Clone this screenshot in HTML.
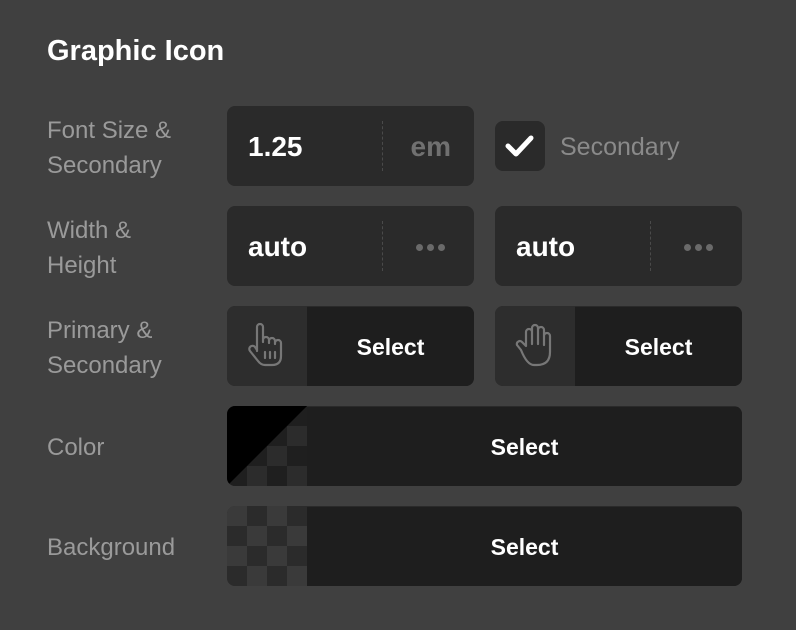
<!DOCTYPE html>
<html><head><meta charset="utf-8"><style>
*{box-sizing:border-box;margin:0;padding:0}
body{width:796px;height:630px;background:#404040;font-family:"Liberation Sans",sans-serif;position:relative;overflow:hidden}
.t{position:absolute;left:47px;top:35px;color:#fff;font-weight:bold;font-size:29px}
.l{position:absolute;left:47px;color:#9a9a9a;font-size:24px;line-height:35px}
.box{position:absolute;height:80px;background:#2a2a2a;border-radius:8px;overflow:hidden}
.v{position:absolute;left:21px;top:1px;line-height:80px;color:#fff;font-weight:bold;font-size:28px}
.sep{position:absolute;left:155px;top:15px;height:50px;border-left:1px dashed #4a4a4a}
.u{position:absolute;right:23px;top:1px;line-height:80px;color:#707070;font-weight:bold;font-size:28px}
.dots{position:absolute;right:29px;top:38px;display:flex;gap:4px}
.dots i{width:7px;height:7px;border-radius:50%;background:#6a6a6a;display:block}
.ic{position:absolute;left:0;top:0;width:80px;height:80px;background:#2d2d2d}
.sel{position:absolute;left:80px;right:0;top:1px;bottom:0;background:#1e1e1e;color:#fff;font-size:23px;font-weight:bold;text-align:center;line-height:80px}
.chk{position:absolute;background:repeating-conic-gradient(#2b2b2b 0 25%,#3a3a3a 0 50%) 0 0/40px 40px}
</style></head><body>
<div class="t">Graphic Icon</div>
<div class="l" style="top:113px">Font Size &amp;<br>Secondary</div>
<div class="l" style="top:213px">Width &amp;<br>Height</div>
<div class="l" style="top:313px">Primary &amp;<br>Secondary</div>
<div class="l" style="top:430px">Color</div>
<div class="l" style="top:530px">Background</div>

<div class="box" style="left:227px;top:106px;width:247px"><div class="v">1.25</div><div class="sep"></div><div class="u">em</div></div>
<div style="position:absolute;left:495px;top:121px;width:50px;height:50px;background:#2a2a2a;border-radius:8px">
<svg width="50" height="50"><path d="M13 25 L21 33 L36 17" fill="none" stroke="#fff" stroke-width="5" stroke-linecap="round" stroke-linejoin="round"/></svg></div>
<div style="position:absolute;left:560px;top:133px;color:#8a8a8a;font-size:25px">Secondary</div>

<div class="box" style="left:227px;top:206px;width:247px"><div class="v">auto</div><div class="sep"></div><div class="dots"><i></i><i></i><i></i></div></div>
<div class="box" style="left:495px;top:206px;width:247px"><div class="v">auto</div><div class="sep"></div><div class="dots"><i></i><i></i><i></i></div></div>

<div class="box" style="left:227px;top:306px;width:247px"><div class="ic">
<svg width="80" height="80" viewBox="0 0 80 80" fill="none" stroke="#777" stroke-width="2.2" stroke-linejoin="round" stroke-linecap="round"><path d="M30 45 V21 a3 3 0 0 1 6 0 V36 M36 34 a3 3 0 0 1 6 0 V37 M42 35 a3 3 0 0 1 6 0 V38 M48 37 a3 3 0 0 1 6 0 V50 q0 9 -9 9 H38 q-4 0 -7 -4 L23 45 a3 3 0 0 1 5 -4 L30 44"/><path d="M38 46v6M43 46v6M48 46v6"/></svg></div><div class="sel">Select</div></div>
<div class="box" style="left:495px;top:306px;width:247px"><div class="ic">
<svg width="80" height="80" viewBox="0 0 80 80" fill="none" stroke="#777" stroke-width="2.2" stroke-linejoin="round" stroke-linecap="round"><path d="M26 44 l-4-5 a3 3 0 0 1 5-3 l4 4 V26 a3 3 0 0 1 6 0 V38 V22 a3 3 0 0 1 6 0 V38 V24 a3 3 0 0 1 6 0 V39 V30 a3 3 0 0 1 6 0 V46 q0 13 -13 13 h-3 q-7 0 -13 -15z"/></svg></div><div class="sel">Select</div></div>

<div class="box" style="left:227px;top:406px;width:515px"><div class="ic chk" style="background-image:repeating-conic-gradient(#1f1f1f 0 25%,#2c2c2c 0 50%);background-size:40px 40px"></div>
<svg style="position:absolute;left:0;top:0" width="80" height="80"><path d="M0 0H80L0 80Z" fill="#000"/></svg><div class="sel">Select</div></div>
<div class="box" style="left:227px;top:506px;width:515px"><div class="ic chk"></div><div class="sel">Select</div></div>
</body></html>
